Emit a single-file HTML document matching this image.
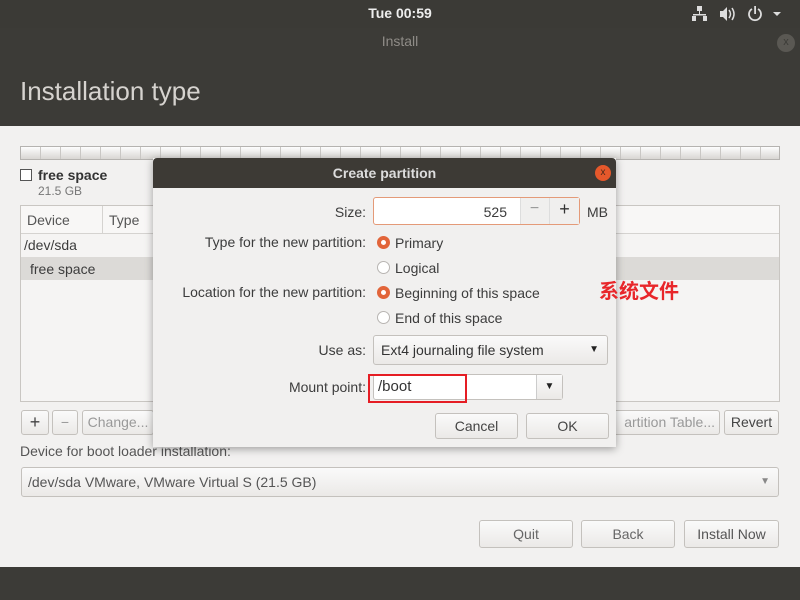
<!DOCTYPE html>
<html><head><meta charset="utf-8"><style>
*{box-sizing:border-box;margin:0;padding:0}
body{width:800px;height:600px;overflow:hidden;background:#f2f1f0;font-family:"Liberation Sans","Noto Sans CJK SC",sans-serif;font-size:14px;color:#3c3c3c;position:relative}
.a{position:absolute}
.btn{position:absolute;border:1px solid #c4c1bd;border-radius:3px;background:linear-gradient(#fafafa,#ebe9e7);text-align:center;color:#444;font-size:14px}
.lbl{position:absolute;text-align:right;color:#3c3c3c;font-size:14px}
.radio{position:absolute;width:13px;height:13px;border-radius:50%;border:1px solid #b8b5b2;background:#fff}
.radio.on{border:4px solid #e2653a;background:#fff}
.rt{position:absolute;font-size:14px;color:#3c3c3c}
</style></head><body>
<div class="a" style="left:0;top:0;width:800px;height:28px;background:#3b3a36"></div>
<div class="a" style="left:0;top:5px;width:800px;text-align:center;color:#eee;font-weight:bold;font-size:14px">Tue 00:59</div>
<svg class="a" style="left:690px;top:6px" width="110" height="16"><g fill="#ddd"><rect x="7" y="0" width="5" height="5"/><rect x="9" y="5" width="1" height="4"/><rect x="3" y="8" width="13" height="1.5"/><rect x="2" y="10" width="4" height="5"/><rect x="13" y="10" width="4" height="5"/><path d="M30 5h3l4-4v14l-4-4h-3z"/><path d="M39 4q3 4 0 8M42 2q4 6 0 12" stroke="#ddd" fill="none" stroke-width="1.5"/><path d="M62 3a6 6 0 1 0 6 0" stroke="#ddd" fill="none" stroke-width="1.8"/><rect x="64.2" y="0" width="1.8" height="8"/><path d="M83 6h8l-4 4z"/></g></svg>
<div class="a" style="left:0;top:28px;width:800px;height:98px;background:#3c3b37"></div>
<div class="a" style="left:0;top:33px;width:800px;text-align:center;color:#8f8c87;font-size:14px">Install</div>
<div class="a" style="left:777px;top:34px;width:18px;height:18px;border-radius:50%;background:#5a5853;color:#3c3b37;font-size:11px;text-align:center;line-height:17px">x</div>
<div class="a" style="left:20px;top:76px;color:#d6d3cf;font-size:26px">Installation type</div>

<div class="a" style="left:20px;top:146px;width:760px;height:14px;border:1px solid #b5b3b0;background:repeating-linear-gradient(90deg,transparent 0 19px,#c9c7c4 19px 20px),linear-gradient(#fdfdfd,#d8d6d3)"></div>
<div class="a" style="left:20px;top:169px;width:12px;height:12px;border:1px solid #555;background:#fff"></div>
<div class="a" style="left:38px;top:167px;font-weight:bold;font-size:14px;color:#333">free space</div>
<div class="a" style="left:38px;top:184px;font-size:12px;color:#777">21.5 GB</div>

<div class="a" style="left:20px;top:205px;width:760px;height:197px;border:1px solid #c9c6c2;background:#f5f4f3"></div>
<div class="a" style="left:21px;top:206px;width:758px;height:28px;border-bottom:1px solid #d5d3d0;background:#f8f7f6"></div>
<div class="a" style="left:102px;top:206px;width:1px;height:28px;background:#d5d3d0"></div>
<div class="a" style="left:27px;top:212px;color:#555">Device</div>
<div class="a" style="left:109px;top:212px;color:#555">Type</div>
<div class="a" style="left:24px;top:237px">/dev/sda</div>
<div class="a" style="left:21px;top:257px;width:758px;height:23px;background:#dcdad7"></div>
<div class="a" style="left:30px;top:261px">free space</div>

<div class="btn" style="left:21px;top:410px;width:28px;height:25px;line-height:22px;font-size:18px">+</div>
<div class="btn" style="left:52px;top:410px;width:26px;height:25px;line-height:22px;color:#999">−</div>
<div class="btn" style="left:82px;top:410px;width:72px;height:25px;line-height:23px;color:#999">Change...</div>
<div class="btn" style="left:600px;top:410px;width:120px;height:25px;line-height:23px;color:#999;text-align:right;padding-right:4px">artition Table...</div>
<div class="btn" style="left:724px;top:410px;width:55px;height:25px;line-height:23px">Revert</div>
<div class="a" style="left:20px;top:443px;color:#555">Device for boot loader installation:</div>
<div class="btn" style="left:21px;top:467px;width:758px;height:30px;line-height:28px;text-align:left;padding-left:6px;color:#555">/dev/sda VMware, VMware Virtual S (21.5 GB)<span style="position:absolute;right:8px;top:0;font-size:10px;color:#888">▼</span></div>
<div class="btn" style="left:479px;top:520px;width:94px;height:28px;line-height:26px;color:#666">Quit</div>
<div class="btn" style="left:581px;top:520px;width:94px;height:28px;line-height:26px;color:#666">Back</div>
<div class="btn" style="left:684px;top:520px;width:95px;height:28px;line-height:26px;color:#555">Install Now</div>
<div class="a" style="left:0;top:567px;width:800px;height:33px;background:#3c3b37"></div>

<div class="a" style="left:153px;top:158px;width:463px;height:289px;background:#f1f0ef;box-shadow:0 2px 8px rgba(0,0,0,.35)"></div>
<div class="a" style="left:153px;top:158px;width:463px;height:30px;background:#3d3a35;border-radius:4px 4px 0 0"></div>
<div class="a" style="left:153px;top:165px;width:463px;text-align:center;color:#ddd;font-weight:bold;font-size:14px">Create partition</div>
<div class="a" style="left:595px;top:165px;width:16px;height:16px;border-radius:50%;background:#e5582b;color:#4a2a1a;font-size:10px;text-align:center;line-height:15px">x</div>

<div class="lbl" style="right:434px;top:204px">Size:</div>
<div class="a" style="left:373px;top:197px;width:207px;height:28px;border:1px solid #e49a78;border-radius:3px;background:#fff"></div>
<div class="a" style="left:373px;top:204px;width:134px;text-align:right">525</div>
<div class="a" style="left:520px;top:198px;width:59px;height:26px;background:#f0efee;border-left:1px solid #ddd"></div>
<div class="a" style="left:549px;top:198px;width:1px;height:26px;background:#ddd"></div>
<div class="a" style="left:520px;top:200px;width:29px;text-align:center;color:#999;font-size:16px">−</div>
<div class="a" style="left:550px;top:199px;width:29px;text-align:center;color:#333;font-size:18px">+</div>
<div class="a" style="left:587px;top:204px">MB</div>

<div class="lbl" style="right:434px;top:234px">Type for the new partition:</div>
<div class="radio on" style="left:377px;top:236px"></div><div class="rt" style="left:395px;top:235px">Primary</div>
<div class="radio" style="left:377px;top:261px"></div><div class="rt" style="left:395px;top:260px">Logical</div>
<div class="lbl" style="right:434px;top:284px">Location for the new partition:</div>
<div class="radio on" style="left:377px;top:286px"></div><div class="rt" style="left:395px;top:285px">Beginning of this space</div>
<div class="radio" style="left:377px;top:311px"></div><div class="rt" style="left:395px;top:310px">End of this space</div>
<div class="a" style="left:599px;top:275px;color:#e8262a;font-size:20px;font-weight:bold;font-family:'Noto Sans CJK SC',sans-serif">系统文件</div>

<div class="lbl" style="right:434px;top:342px">Use as:</div>
<div class="btn" style="left:373px;top:335px;width:235px;height:30px;line-height:28px;text-align:left;padding-left:7px;color:#333">Ext4 journaling file system<span style="position:absolute;right:8px;top:0;font-size:10px;color:#222">▼</span></div>
<div class="lbl" style="right:434px;top:379px">Mount point:</div>
<div class="a" style="left:373px;top:374px;width:190px;height:26px;border:1px solid #c4c1bd;border-radius:3px;background:#fff"></div>
<div class="a" style="left:536px;top:375px;width:26px;height:24px;border-left:1px solid #ccc;background:linear-gradient(#fafafa,#ebe9e7);text-align:center;font-size:10px;line-height:24px;color:#222">▼</div>
<div class="a" style="left:368px;top:374px;width:99px;height:29px;border:2px solid #e51d24"></div>
<div class="a" style="left:378px;top:378px;font-size:15px;color:#333">/boot</div>

<div class="btn" style="left:435px;top:413px;width:83px;height:26px;line-height:25px">Cancel</div>
<div class="btn" style="left:526px;top:413px;width:83px;height:26px;line-height:25px">OK</div>
</body></html>
